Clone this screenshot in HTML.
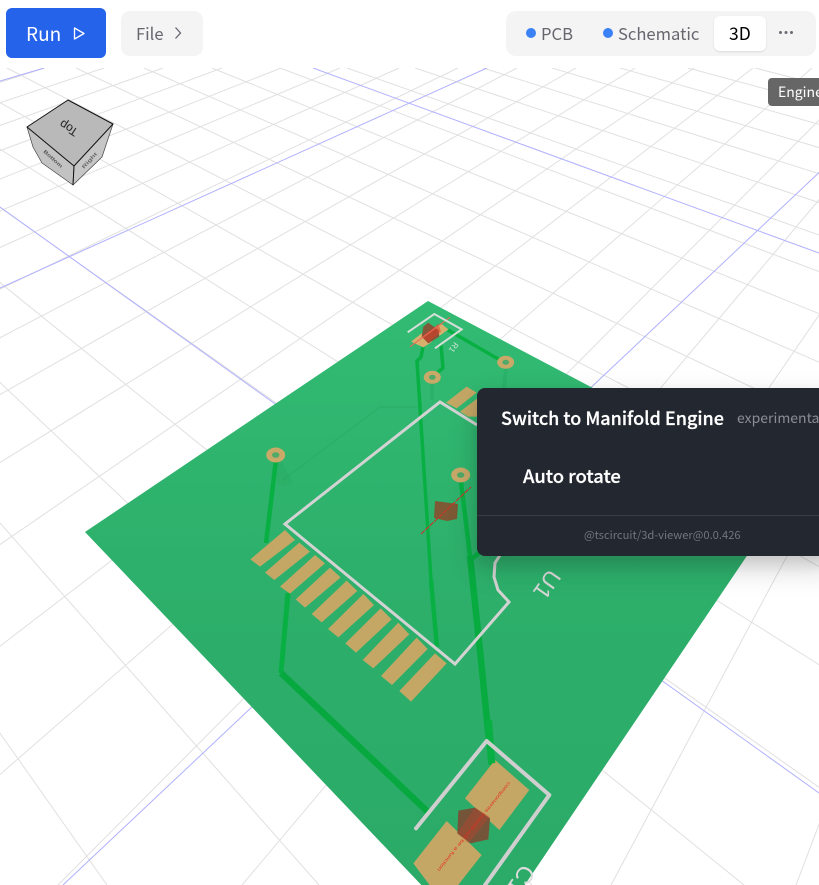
<!DOCTYPE html>
<html><head><meta charset="utf-8"><style>
html,body{margin:0;padding:0;background:#fff;width:819px;height:885px;overflow:hidden}
body{position:relative;font-family:"Noto Sans CJK SC","Liberation Sans",sans-serif}
.a{position:absolute;white-space:nowrap;line-height:1}
</style></head><body>
<svg width="819" height="817" viewBox="0 68 819 817" style="position:absolute;left:0;top:68px">
<defs><linearGradient id="bg" x1="0" y1="300" x2="0" y2="885" gradientUnits="userSpaceOnUse"><stop offset="0" stop-color="#32bb73"/><stop offset=".45" stop-color="#2db06b"/><stop offset="1" stop-color="#2baa68"/></linearGradient></defs>
<g stroke="#e0e0e0" stroke-width="1" fill="none">
<path d="M-469 68L107 885M-401 68L319 885M-333 68L532 885M-265 68L744 885M-197 68L957 885M-129 68L1169 885M-61 68L1381 885M7 68L1594 885M76 68L1806 885M144 68L2019 885M212 68L2231 885M280 68L2443 885M347 68L2656 885M415 68L2868 885M483 68L3081 885M552 68L3293 885M620 68L3505 885M688 68L3718 885M755 68L3930 885"/>
<path d="M45 68L-2525 885M104 68L-2341 885M163 68L-2156 885M222 68L-1972 885M281 68L-1787 885M340 68L-1603 885M399 68L-1418 885M458 68L-1234 885M517 68L-1049 885M576 68L-865 885M635 68L-680 885M694 68L-496 885M753 68L-311 885M812 68L-127 885M871 68L58 885M930 68L242 885M989 68L427 885M1048 68L611 885M1107 68L796 885M1166 68L980 885"/>
</g>
<g stroke="#b0b0ff" stroke-width="1" fill="none">
<path d="M313 68L819 253M0 207L819 793M44 68L0 81M487 68L0 288M930 68L63 885"/>
</g>
<polygon points="428,301 85,532 428,892 520,892 790,492" fill="url(#bg)"/>
<g fill="none" stroke="#1c9e55" stroke-opacity=".22" stroke-width="1.5"><path d="M283 480L380 407L420 407"/></g>
<polygon points="276,460 281,460 293,483 283,486 277,484" fill="#1f9e55" fill-opacity=".18"/>
<g stroke="#1c9e55" stroke-opacity=".22" stroke-width="4" fill="none"><path d="M432 382L432 400M506 367L503 400"/></g>
<g stroke="#08b043" fill="none" stroke-linejoin="round">
<path stroke-width="3.500" d="M423 347L421 357L417 361L424 470L431 580"/>
<path stroke-width="4.500" d="M431 580L437 647"/>
<path stroke-width="3.500" d="M441 345L443 368L438 372M448 330L500 360"/>
<path stroke-width="4.500" d="M276 460L266 543"/>
<path stroke-width="5" d="M288 593L281 673"/>
<path stroke="#07a83f" stroke-width="6.500" d="M281 673L428 812"/>
<path stroke-width="4.500" d="M461 482L470 556M473 558L480 552"/>
<path stroke="#07ab40" stroke-width="6.500" d="M470 556L481 660L488 730L492 765"/>
</g>
<g fill="none" stroke="#d3d3d3" stroke-width="3" stroke-linejoin="miter">
<path d="M477 425L440 402L285 524L455 664L509 602L498 590L494 577L495 563L502 552"/>
</g>
<g transform="translate(240 390) scale(.33333)" fill="#c4a765">
<polygon points="31,508 135,420 165,450 60,530"/><polygon points="75,548 178,458 210,485 103,570"/><polygon points="120,590 225,495 255,520 150,611"/><polygon points="167,628 270,533 302,562 195,653"/><polygon points="215,672 320,572 352,603 245,697"/><polygon points="264,717 370,612 402,645 295,742"/><polygon points="316,760 422,655 455,688 348,788"/><polygon points="368,810 475,698 508,733 400,835"/><polygon points="423,858 530,743 563,777 456,885"/><polygon points="478,903 585,790 620,820 513,935"/>
<polygon points="618,38 680,-10 710,8 650,55"/><polygon points="660,65 712,25 712,80 685,80"/>
</g>
<g fill="#c8a968">
<ellipse cx="275.700" cy="455" rx="9.500" ry="7.500"/><ellipse cx="460.700" cy="475" rx="9.500" ry="7.500"/><ellipse cx="432.300" cy="377.300" rx="8.500" ry="6.500"/><ellipse cx="505.700" cy="362.300" rx="8.500" ry="6.500"/>
</g>
<g fill="#4fa968"><ellipse cx="275.700" cy="455" rx="3.700" ry="2.800"/><ellipse cx="460.700" cy="475" rx="3.700" ry="2.800"/><ellipse cx="432.300" cy="377.300" rx="3.300" ry="2.500"/><ellipse cx="505.700" cy="362.300" rx="3.300" ry="2.500"/></g>
<polygon points="435,501 458,504 457,519 447,521 434,518" fill="#7d5a35"/>
<path d="M421 534L471 487" stroke="#c23a2a" stroke-width="1.200" stroke-dasharray="5 1" fill="none"/>
<g transform="translate(395 300) scale(.33333)">
<polygon points="48,125 80,100 112,125 85,142" fill="#d6b06c"/><polygon points="112,85 140,72 160,88 130,110" fill="#d6b06c"/>
<polygon points="100,68 130,90 133,110 100,130 80,110 85,80" fill="#84563a"/>
<polygon points="80,110 130,72 138,95 100,128" fill="#e23b25" fill-opacity=".55"/>
<path d="M45 140L165 52" stroke="#ee6a55" stroke-width="3" fill="none"/>
<path d="M38 97L118 42L200 88L120 145" stroke="#d8dfda" stroke-width="6" fill="none"/>
<text transform="translate(178 125) rotate(125)" font-size="24" fill="#d5e6da" font-family="Liberation Sans">R1</text>
</g>
<g transform="translate(380 720) scale(.33333)">
<polygon points="345,120 448,210 358,330 255,235" fill="#c4a765"/><polygon points="200,303 305,405 215,520 160,510 100,430" fill="#c4a765"/>
<path d="M325 0L335 130" stroke="#08b043" stroke-width="22" fill="none"/>
<polygon points="235,272 285,263 330,295 325,358 272,370 232,340" fill="#75553a"/>
<polygon points="285,263 330,290 265,370 232,340" fill="#d8402a" fill-opacity=".3"/>
<path d="M108 325L320 63L508 225L315 495" stroke="#cfcfcf" stroke-width="12" fill="none" stroke-linecap="round" stroke-linejoin="round"/>
<text transform="translate(385 185) rotate(129)" font-size="14" fill="#e52e1c" font-family="Liberation Sans" textLength="340" lengthAdjust="spacingAndGlyphs">components should not be a function</text>
<text transform="translate(429 429) rotate(125)" font-size="72" fill="#dcdcdc" font-family="Liberation Sans">C1</text>
</g>
<text transform="translate(549 568) rotate(125)" font-size="23" fill="#d8d8d8" font-family="Liberation Sans">U1</text>
<polygon points="27,127 33,147 42,163 73,185 74,166" fill="#c2c2c2" stroke="#444" stroke-width=".7" stroke-linejoin="round"/>
<polygon points="113,124 102,157 73,185 74,166" fill="#c6c6c6" stroke="#444" stroke-width=".7" stroke-linejoin="round"/>
<polygon points="68,100 113,124 74,166 27,127" fill="#b9b9b9" stroke="#111" stroke-width="1" stroke-linejoin="round"/>
<path d="M74 166L73 185" stroke="#111" stroke-width="1"/>
<text transform="translate(79 130) rotate(213)" font-size="12" fill="#222" font-family="Liberation Sans">Top</text>
<text transform="translate(43 152) rotate(42)" font-size="5" font-weight="700" fill="#555" font-family="Liberation Sans" textLength="24" lengthAdjust="spacingAndGlyphs">Bottom</text>
<text transform="translate(84 169) rotate(-48)" font-size="5" font-weight="700" fill="#666" font-family="Liberation Sans" textLength="20" lengthAdjust="spacingAndGlyphs">Right</text>
</svg>

<div style="position:absolute;left:6px;top:8px;width:100px;height:50px;background:#2563eb;border-radius:6px"></div>
<div class="a" style="left:26px;top:24px;font-size:19px;color:#fff">Run</div>
<svg style="position:absolute;left:70px;top:24px" width="18" height="18" viewBox="0 0 18 18"><path d="M4.500 4L14 9.500L4.500 15Z" fill="none" stroke="#fff" stroke-width="1.300" stroke-linejoin="round"/></svg>
<div style="position:absolute;left:121px;top:11px;width:82px;height:45px;background:#f4f4f5;border-radius:9px"></div>
<div class="a" style="left:136px;top:25px;font-size:16.500px;color:#66666e">File</div>
<svg style="position:absolute;left:170px;top:25px" width="16" height="16" viewBox="0 0 16 16"><path d="M5.500 3L10.500 8.500L5.500 14" transform="translate(0 -.5)" fill="none" stroke="#66666e" stroke-width="1.300"/></svg>

<div style="position:absolute;left:506px;top:11px;width:310px;height:45px;background:#f4f4f5;border-radius:10px"></div>
<div style="position:absolute;left:526px;top:28px;width:10px;height:10px;border-radius:50%;background:#3b82f6"></div>
<div class="a" style="left:541px;top:25px;font-size:16.600px;color:#66666e">PCB</div>
<div style="position:absolute;left:603px;top:28px;width:10px;height:10px;border-radius:50%;background:#3b82f6"></div>
<div class="a" style="left:618px;top:25px;font-size:16.600px;color:#66666e">Schematic</div>
<div style="position:absolute;left:714px;top:16px;width:52px;height:35px;background:#fff;border-radius:6px;box-shadow:0 1px 2px rgba(0,0,0,.1)"></div>
<div class="a" style="left:729px;top:25px;font-size:17.500px;color:#000">3D</div>
<div style="position:absolute;left:779px;top:31px;width:3px;height:3px;border-radius:50%;background:#6b6b73;box-shadow:5.500px 0 0 #6b6b73,11px 0 0 #6b6b73"></div>

<div style="position:absolute;left:768px;top:78px;width:60px;height:28px;background:#666;border-radius:4px"></div>
<div class="a" style="left:778px;top:85px;font-size:14px;color:#fff">Engine</div>

<div style="position:absolute;left:477px;top:388px;width:360px;height:168px;background:#23272f;border-radius:8px;box-shadow:0 12px 30px rgba(22,23,24,.18),0 8px 14px rgba(22,23,24,.1)"></div>
<div style="position:absolute;left:477px;top:515px;width:342px;height:1px;background:#3a3d46"></div>
<div class="a" style="left:501px;top:409px;font-size:18px;font-weight:500;color:#fff;-webkit-text-stroke:.25px #fff">Switch to Manifold Engine</div>
<div class="a" style="left:737px;top:411px;font-size:14px;color:#8b8d93">experimental</div>
<div class="a" style="left:523px;top:467px;font-size:18.400px;font-weight:500;color:#fff;-webkit-text-stroke:.25px #fff">Auto rotate</div>
<div class="a" style="left:584px;top:530px;font-size:11.200px;color:#73757d">@tscircuit/3d-viewer@0.0.426</div>
</body></html>
